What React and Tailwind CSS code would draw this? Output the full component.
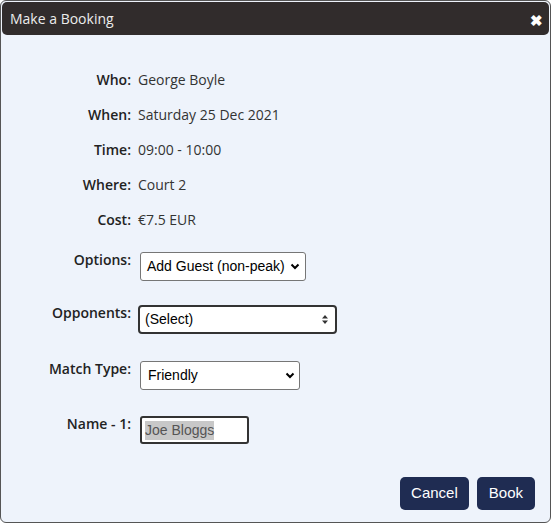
import { useState } from 'react';

const info = [
  { label: 'Who:', value: 'George Boyle' },
  { label: 'When:', value: 'Saturday 25 Dec 2021' },
  { label: 'Time:', value: '09:00 - 10:00' },
  { label: 'Where:', value: 'Court 2' },
  { label: 'Cost:', value: '€7.5 EUR' },
];

function Chevron() {
  return (
    <svg width="10" height="7" viewBox="0 0 10 7" className="text-black">
      <path d="M1.5 1.5 L5 5 L8.5 1.5" fill="none" stroke="currentColor" strokeWidth="2" />
    </svg>
  );
}

function UpDown() {
  return (
    <svg width="6" height="9" viewBox="0 0 6 9" className="text-[#333]">
      <path d="M0 3.5 L3 0 L6 3.5 Z M0 5.5 L3 9 L6 5.5 Z" fill="currentColor" />
    </svg>
  );
}

function FieldLabel({ children }) {
  return (
    <div className="w-[130px] shrink-0 text-right font-semibold text-[14px] text-[#222] -mt-[3px]">
      {children}
    </div>
  );
}

export default function App() {
  const [option] = useState('Add Guest (non-peak)');

  return (
    <div className="w-[551px] h-[523px] bg-[#eef3fb] border border-[#555] rounded-[6px] overflow-hidden relative font-['Open_Sans',sans-serif]">
      {/* Title bar */}
      <div className="m-px h-[33px] bg-[#312c2c] rounded-[5px] flex items-center justify-between pl-2 pr-[6px]">
        <span className="text-[14px] text-[#ececec]">Make a Booking</span>
        <span className="text-white text-[15px] font-bold leading-none mt-[3px]">✖</span>
      </div>

      {/* Booking details */}
      <div className="pt-[26px]">
        {info.map((row) => (
          <div key={row.label} className="flex items-center h-[35px] text-[14px]">
            <div className="w-[130px] text-right font-semibold text-[#222]">{row.label}</div>
            <div className="pl-[7px] text-[#333]">{row.value}</div>
          </div>
        ))}
      </div>

      {/* Form fields */}
      <div>
        <div className="flex items-start mt-[15px]">
          <FieldLabel>Options:</FieldLabel>
          <div className="ml-[9px] w-[166px] h-[29px] bg-white border border-[#767676] rounded-[3px] flex items-center justify-between pl-[6px] pr-[5px] text-[14px] text-black font-['Liberation_Sans',Arial,sans-serif]">
            <span>{option}</span>
            <Chevron />
          </div>
        </div>

        <div className="flex items-start mt-[24px]">
          <FieldLabel>Opponents:</FieldLabel>
          <div className="ml-[7px] w-[199px] h-[29px] bg-white border-2 border-[#333] rounded-[4px] flex items-center justify-between pl-[5px] pr-[7px] text-[14px] text-black font-['Liberation_Sans',Arial,sans-serif]">
            <span>(Select)</span>
            <UpDown />
          </div>
        </div>

        <div className="flex items-start mt-[27px]">
          <FieldLabel>Match Type:</FieldLabel>
          <div className="ml-[9px] w-[160px] h-[29px] bg-white border border-[#767676] rounded-[3px] flex items-center justify-between pl-[7px] pr-[4px] text-[14px] text-black font-['Liberation_Sans',Arial,sans-serif]">
            <span>Friendly</span>
            <Chevron />
          </div>
        </div>

        <div className="flex items-start mt-[26px]">
          <FieldLabel>Name - 1:</FieldLabel>
          <div className="ml-[9px] w-[109px] h-[28px] bg-white border-2 border-[#333] rounded-[3px] flex items-center pl-[3px] text-[14px] text-[#555] font-['Liberation_Sans',Arial,sans-serif]">
            <span className="bg-[#c8c8c8] leading-[19px]">Joe Bloggs</span>
          </div>
        </div>
      </div>

      {/* Actions */}
      <div className="flex justify-end gap-2 pr-[15px] mt-[33px]">
        <button className="h-[33px] px-[11px] bg-[#1f2c52] text-white text-[15px] rounded-[5px] font-['Liberation_Sans',Arial,sans-serif]">
          Cancel
        </button>
        <button className="h-[33px] px-[12px] bg-[#1f2c52] text-white text-[15px] rounded-[5px] font-['Liberation_Sans',Arial,sans-serif]">
          Book
        </button>
      </div>
    </div>
  );
}
